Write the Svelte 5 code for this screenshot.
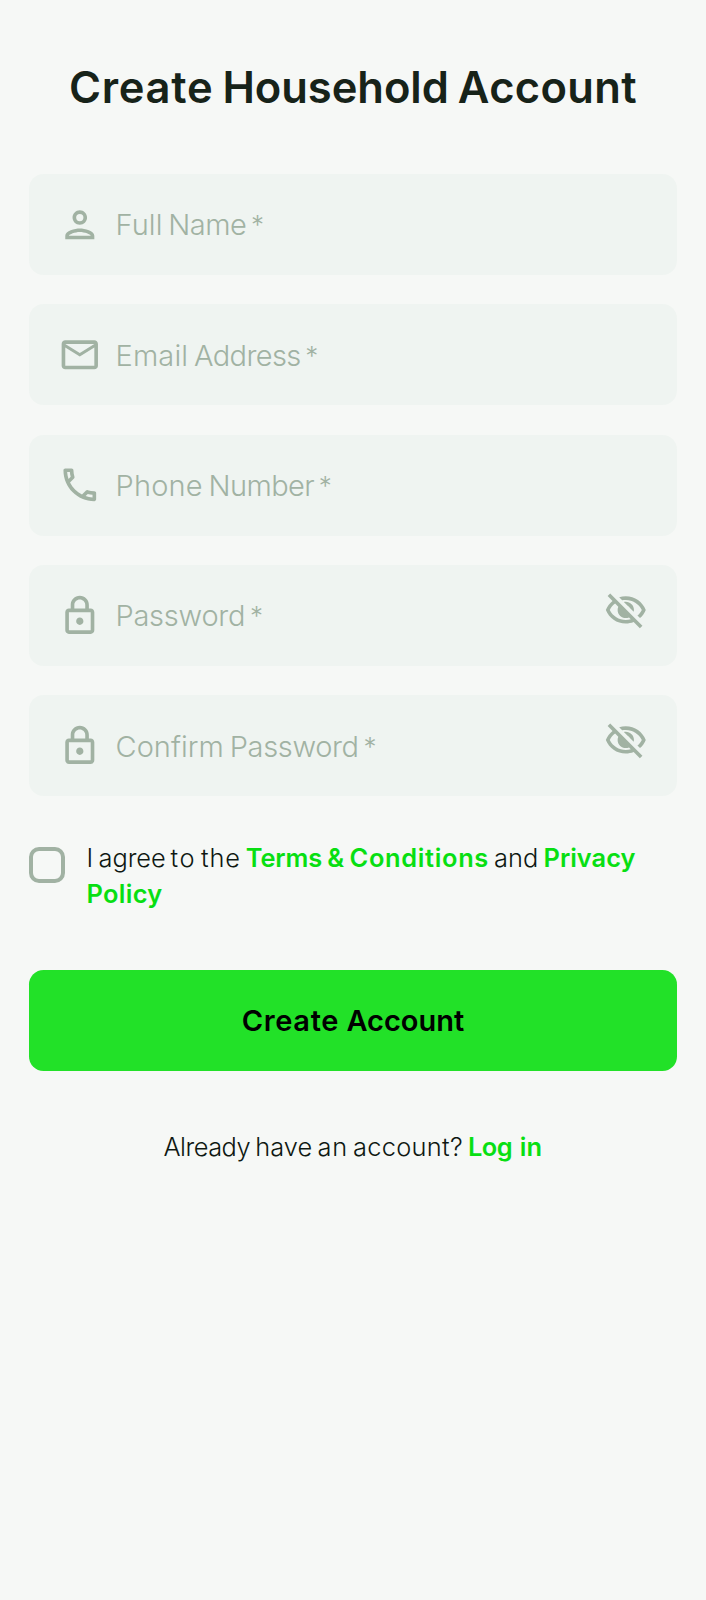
<script>
  const icons = {
    person: 'M12 6a2 2 0 1 1 0 4 2 2 0 0 1 0-4m0 10c2.7 0 5.8 1.29 6 2H6c.23-.72 3.31-2 6-2m0-12C9.79 4 8 5.79 8 8s1.79 4 4 4 4-1.79 4-4-1.79-4-4-4zm0 10c-2.67 0-8 1.34-8 4v2h16v-2c0-2.66-5.33-4-8-4z',
    mail: 'M22 6c0-1.1-.9-2-2-2H4c-1.1 0-2 .9-2 2v12c0 1.1.9 2 2 2h16c1.1 0 2-.9 2-2V6zm-2 0l-8 5-8-5h16zm0 12H4V8l8 5 8-5v10z',
    phone: 'M6.54 5c.06.89.21 1.76.45 2.59l-1.2 1.2c-.41-1.2-.67-2.47-.76-3.79h1.51m9.86 12.02c.85.24 1.72.39 2.6.45v1.49c-1.32-.09-2.59-.35-3.8-.75l1.2-1.19M7.5 3H4c-.55 0-1 .45-1 1 0 9.39 7.61 17 17 17 .55 0 1-.45 1-1v-3.49c0-.55-.45-1-1-1-1.24 0-2.45-.2-3.57-.57-.1-.04-.21-.05-.31-.05-.26 0-.51.1-.71.29l-2.2 2.2c-2.83-1.45-5.15-3.76-6.59-6.59l2.2-2.2c.28-.28.36-.67.25-1.02C8.7 6.45 8.5 5.25 8.5 4c0-.55-.45-1-1-1z',
    lock: 'M18 8h-1V6c0-2.76-2.24-5-5-5S7 3.24 7 6v2H6c-1.1 0-2 .9-2 2v10c0 1.1.9 2 2 2h12c1.1 0 2-.9 2-2V10c0-1.1-.9-2-2-2zM9 6c0-1.66 1.34-3 3-3s3 1.34 3 3v2H9V6zm9 14H6V10h12v10zm-6-3c1.1 0 2-.9 2-2s-.9-2-2-2-2 .9-2 2 .9 2 2 2z',
    eyeOff: 'M12 6c3.79 0 7.17 2.13 8.82 5.5-.59 1.22-1.42 2.27-2.41 3.12l1.41 1.41c1.39-1.23 2.49-2.77 3.18-4.53C21.27 7.11 17 4 12 4c-1.27 0-2.49.2-3.64.57l1.65 1.65C10.66 6.09 11.32 6 12 6zm-1.07 1.14L13 9.21c.57.25 1.03.71 1.28 1.28l2.07 2.07c.08-.34.14-.7.14-1.07C16.5 9.01 14.48 7 12 7c-.37 0-.72.05-1.07.14zM2.01 3.87l2.68 2.68C3.06 7.83 1.77 9.53 1 11.5 2.73 15.89 7 19 12 19c1.52 0 2.98-.29 4.32-.82l3.42 3.42 1.41-1.41L3.42 2.45 2.01 3.87zM6.11 7.97l1.75 1.75c-.23.55-.36 1.15-.36 1.78 0 2.48 2.02 4.5 4.5 4.5.63 0 1.23-.13 1.77-.36l.98.98c-.88.24-1.8.38-2.75.38-3.79 0-7.17-2.13-8.82-5.5.7-1.43 1.72-2.61 2.93-3.53z'
  };

  // Each word carries its own tracking in px.
  const fields = [
    { icon: 'person', words: [['Full', 0.1], ['Name', -0.55]] },
    { icon: 'mail', words: [['Email', 0.15], ['Address', -0.64]] },
    { icon: 'phone', words: [['Phone', 0.2], ['Number', -0.6]] },
    { icon: 'lock', words: [['Password', -0.25]], secret: true },
    { icon: 'lock', words: [['Confirm', 0.05], ['Password', -0.35]], secret: true }
  ];
</script>

{#snippet icon(name)}
  <svg class="icon" viewBox="0 0 24 24" aria-hidden="true"><path d={icons[name]} /></svg>
{/snippet}

{#snippet phrase(words)}
  {#each words as [word, tracking], i}{i ? ' ' : ''}<span style:letter-spacing="{tracking}px">{word}</span>{/each}
{/snippet}

<main>
  <h1>{@render phrase([['Create', 0.7], ['Household', -0.05], ['Account', 0.35]])}</h1>

  <form onsubmit={(e) => e.preventDefault()}>
    {#each fields as field}
      <div class="field">
        {@render icon(field.icon)}
        <span class="label">{@render phrase(field.words)} <span class="star">*</span></span>
        {#if field.secret}
          <span class="toggle">{@render icon('eyeOff')}</span>
        {/if}
      </div>
    {/each}

    <div class="agree">
      <span class="checkbox"></span>
      <p>
        {@render phrase([['I', 0.4], ['agree', -0.09], ['to', 1.5], ['the', 0.8]])}
        <a href="#terms">{@render phrase([['Terms', -0.15], ['&', 0], ['Conditions', 0.66]])}</a>
        {@render phrase([['and', 0.1]])}
        <a href="#privacy">{@render phrase([['Privacy', 0], ['Policy', 0.3]])}</a>
      </p>
    </div>

    <button>{@render phrase([['Create', 0.66], ['Account', 0]])}</button>
  </form>

  <p class="login">
    {@render phrase([['Already', -0.5], ['have', 0.1], ['an', 0.8], ['account?', 0.3]])}
    <a href="#login">{@render phrase([['Log', -0.5], ['in', 0.35]])}</a>
  </p>
</main>

<style>
  :global(body) {
    background: #f6f8f6;
  }
  main {
    box-sizing: border-box;
    min-height: 1600px;
    padding: 57px 29px 0;
    font-family: Inter, sans-serif;
    color: #0f1812;
    background: #f6f8f6;
  }
  h1 {
    margin: 0 0 57px;
    font-size: 43.5px;
    line-height: 60px;
    font-weight: 600;
    text-align: center;
    word-spacing: -1.9px;
    color: #172319;
  }
  form {
    display: flex;
    flex-direction: column;
  }
  .field {
    box-sizing: border-box;
    display: flex;
    align-items: center;
    height: 101px;
    margin-bottom: 29.35px;
    padding: 0 29px 0 28.7px;
    border-radius: 14.5px;
    background: #eff4f1;
    color: #a1b2a3;
  }
  .icon {
    display: block;
    flex: none;
    width: 43.6px;
    height: 43.6px;
    fill: currentColor;
  }
  .label {
    flex: 1;
    margin-left: 14.2px;
    padding-top: 1.5px;
    font-size: 29px;
    font-weight: 330;
    line-height: 40px;
    word-spacing: -2.4px;
  }
  .star {
    display: inline-block;
    margin-left: -1px;
    font-size: 26px;
    line-height: 1;
    transform: translateY(-1.5px);
  }
  .toggle {
    margin-bottom: 9.6px;
  }
  .agree {
    display: flex;
    gap: 21.5px;
    margin-top: 14.2px;
  }
  .checkbox {
    box-sizing: border-box;
    flex: none;
    width: 36px;
    height: 36px;
    margin-top: 7px;
    border: 4px solid #a1b2a3;
    border-radius: 10px;
  }
  p {
    margin: 0;
    font-size: 25.4px;
    font-weight: 300;
    line-height: 36px;
    word-spacing: -2.1px;
  }
  a {
    color: #08df12;
    font-weight: 600;
    text-decoration: none;
    word-spacing: -1px;
  }
  button {
    height: 101px;
    margin: 58px 0 0;
    padding: 0;
    border: 0;
    border-radius: 14.5px;
    background: #22e128;
    color: #000;
    font: 600 29px Inter, sans-serif;
  }
  .login {
    margin-top: 58px;
    text-align: center;
  }
  .login a {
    word-spacing: 1px;
  }
</style>
